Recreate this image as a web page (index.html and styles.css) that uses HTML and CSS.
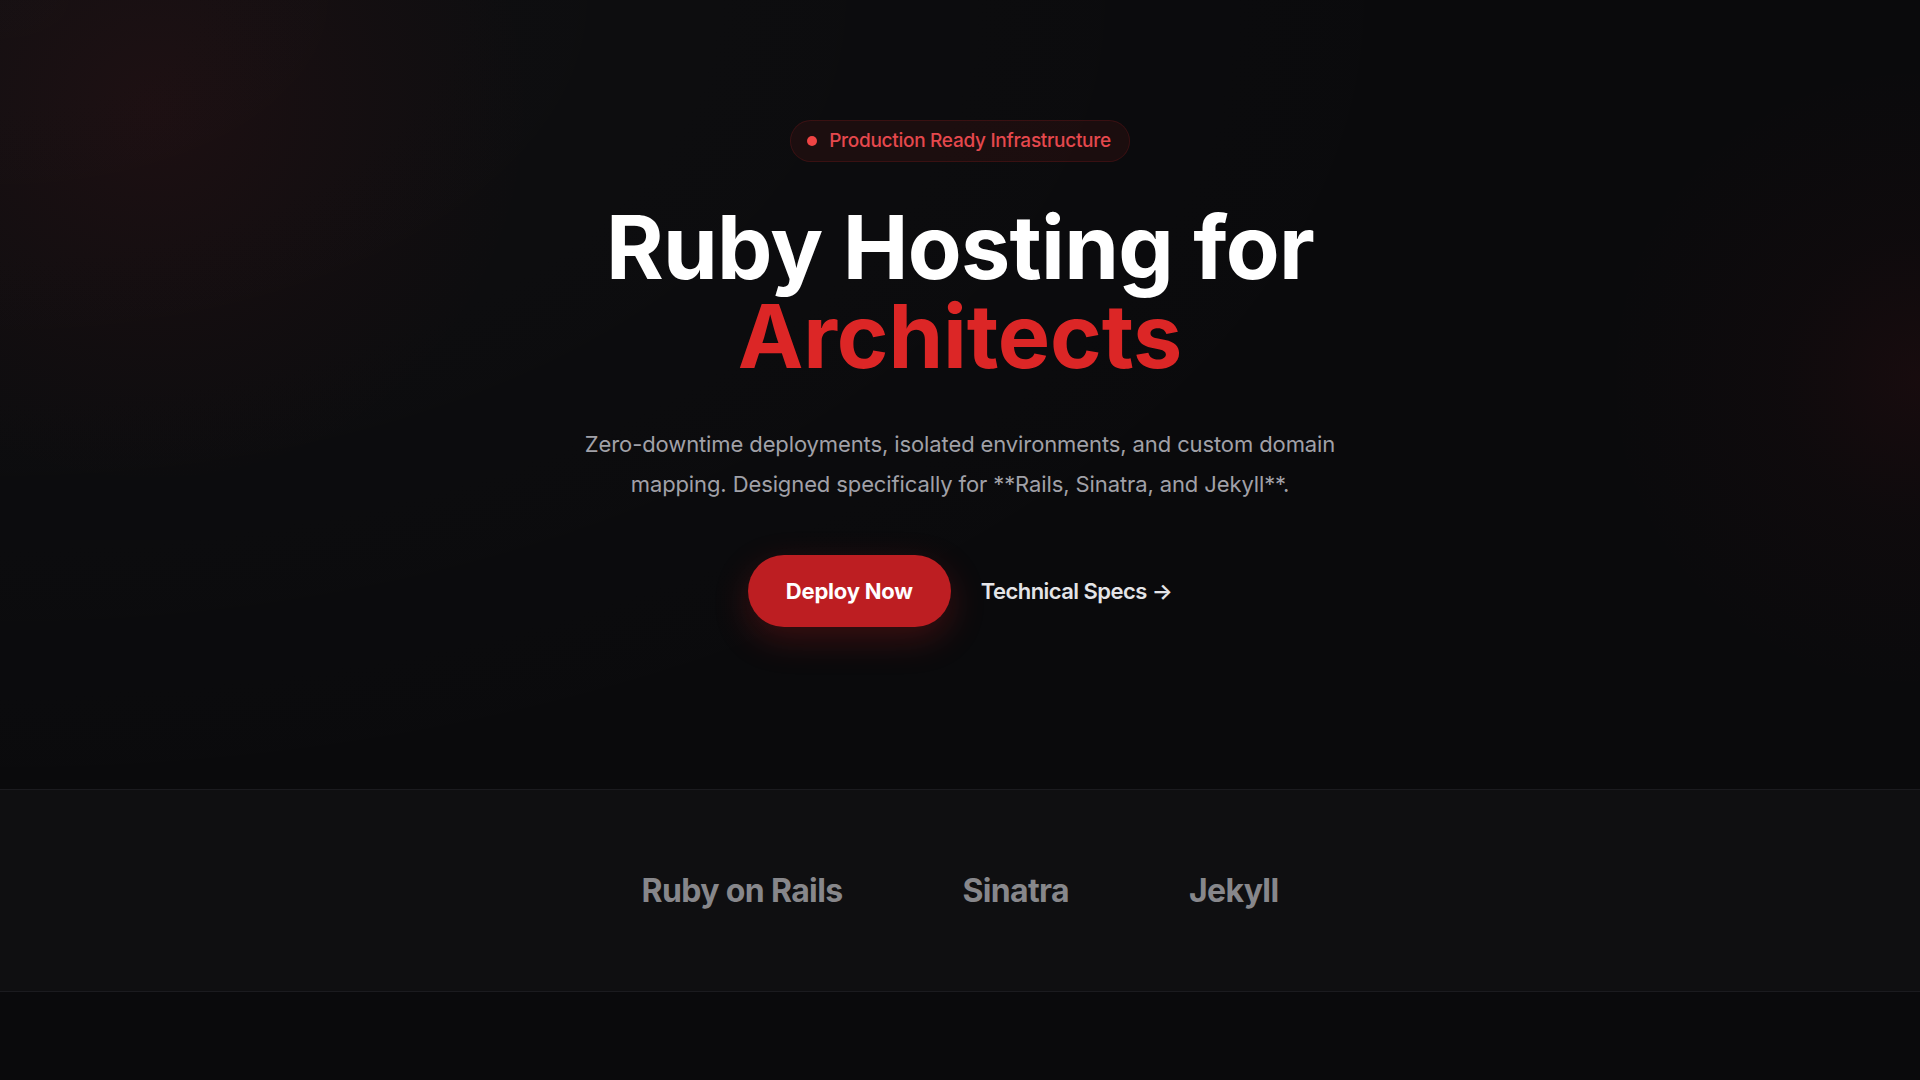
FILE: index.html
```html
<!DOCTYPE html>
<html lang="en">
<head>
  <meta charset="utf-8">
  <title>Ruby Hosting for Architects</title>
  <link rel="stylesheet" href="styles.css">
</head>
<body>
  <main class="page">
    <section class="hero">
      <div class="badge">
        <span class="badge-dot"></span>
        <span class="badge-text">Production Ready Infrastructure</span>
      </div>
      <h1 class="headline">
        <span class="headline-line">Ruby Hosting for</span>
        <span class="headline-line headline-accent">Architects</span>
      </h1>
      <p class="lede">Zero-downtime deployments, isolated environments, and custom domain mapping. Designed specifically for **Rails, Sinatra, and Jekyll**.</p>
      <div class="actions">
        <a class="btn-primary" href="#deploy">Deploy Now</a>
        <a class="btn-link" href="#specs">Technical Specs →</a>
      </div>
    </section>

    <section class="frameworks">
      <ul class="framework-list">
        <li class="framework">Ruby on Rails</li>
        <li class="framework">Sinatra</li>
        <li class="framework">Jekyll</li>
      </ul>
    </section>

    <div class="page-tail"></div>
  </main>
</body>
</html>
```

FILE: styles.css
```css
* {
  box-sizing: border-box;
}

html,
body {
  margin: 0;
  padding: 0;
  height: 100%;
}

body {
  background: #0a0a0c;
  color: #fafafa;
  font-family: "Inter", "Noto Sans", "Liberation Sans", sans-serif;
  -webkit-font-smoothing: antialiased;
}

.page {
  min-height: 100vh;
  display: flex;
  flex-direction: column;
  background:
    radial-gradient(circle at 8% 10%, rgba(200, 30, 40, 0.08) 0, rgba(200, 30, 40, 0.04) 180px, transparent 380px),
    radial-gradient(circle at 100% 35%, rgba(200, 30, 40, 0.07) 0, rgba(200, 30, 40, 0.025) 140px, transparent 320px),
    radial-gradient(ellipse at 0% 0%, rgba(255, 255, 255, 0.025) 0, transparent 55%),
    #0a0a0c;
}

/* ---------- hero ---------- */

.hero {
  display: flex;
  flex-direction: column;
  align-items: center;
  text-align: center;
  padding: 120px 24px 162px;
}

.badge {
  display: inline-flex;
  align-items: center;
  gap: 12px;
  padding: 8px 18px 8px 16px;
  border-radius: 999px;
  background: rgba(220, 38, 38, 0.08);
  border: 1px solid rgba(220, 38, 38, 0.16);
}

.badge-dot {
  width: 10px;
  height: 10px;
  border-radius: 50%;
  background: #ef4444;
}

.badge-text {
  font-size: 19px;
  line-height: 24px;
  font-weight: 500;
  color: #e5484d;
  letter-spacing: -0.015em;
}

.headline {
  margin: 41px 0 0;
  font-size: 88px;
  line-height: 89px;
  font-weight: 700;
  letter-spacing: -0.008em;
  color: #ffffff;
}

.headline-line {
  display: block;
}

.headline-accent {
  color: #dc2626;
  letter-spacing: -0.002em;
}

.lede {
  margin: 43px 0 0;
  max-width: 800px;
  font-size: 22px;
  line-height: 40px;
  font-weight: 400;
  color: #a1a1a8;
  letter-spacing: -0.005em;
}

.actions {
  margin-top: 51px;
  display: flex;
  align-items: center;
  gap: 30px;
}

.btn-primary {
  display: inline-flex;
  align-items: center;
  justify-content: center;
  height: 72px;
  width: 203px;
  border-radius: 999px;
  background: #bd1e22;
  color: #ffffff;
  font-size: 22px;
  font-weight: 700;
  letter-spacing: -0.01em;
  text-decoration: none;
  box-shadow: 0 12px 34px rgba(185, 28, 28, 0.28);
}

.btn-link {
  color: #e4e4e7;
  font-size: 22px;
  font-weight: 600;
  letter-spacing: -0.025em;
  text-decoration: none;
}

/* ---------- framework strip ---------- */

.frameworks {
  background: #0f0f11;
  border-top: 1px solid #1b1b1f;
  border-bottom: 1px solid #1b1b1f;
  padding: 81px 24px 80px;
}

.framework-list {
  list-style: none;
  margin: 0;
  padding: 0;
  display: flex;
  justify-content: center;
  gap: 120px;
}

.framework {
  font-size: 32px;
  line-height: 40px;
  font-weight: 700;
  letter-spacing: -0.02em;
  color: #87878b;
}

.page-tail {
  flex: 1;
  background: #0a0a0c;
}
```
